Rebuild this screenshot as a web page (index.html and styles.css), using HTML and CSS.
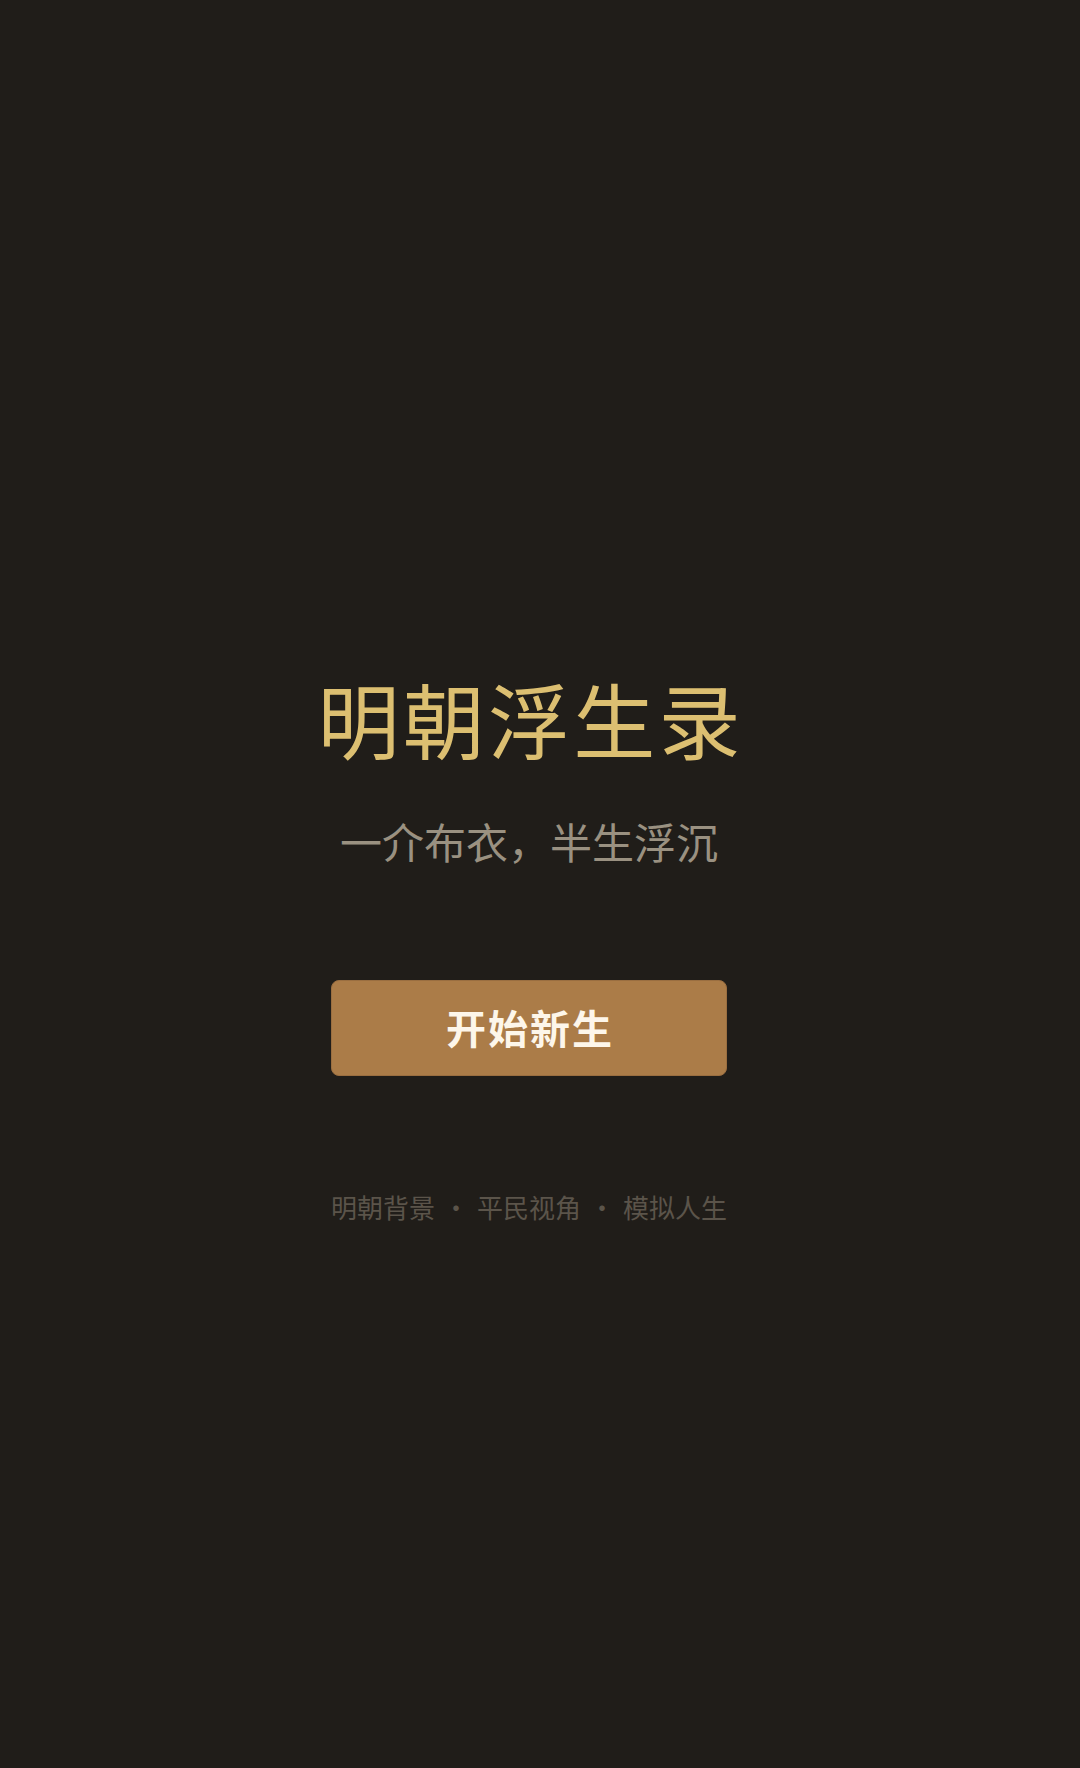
FILE: index.html
```html
<!DOCTYPE html>
<html lang="zh-CN">
<head>
<meta charset="utf-8">
<title>明朝浮生录</title>
<link rel="stylesheet" href="styles.css">
</head>
<body>
<main class="screen">
  <h1 class="title">明朝浮生录</h1>
  <p class="subtitle">一介布衣，半生浮沉</p>
  <button class="start-btn" type="button">开始新生</button>
  <div class="tags">
    <span class="tag">明朝背景</span>
    <span class="dot">・</span>
    <span class="tag">平民视角</span>
    <span class="dot">・</span>
    <span class="tag">模拟人生</span>
  </div>
</main>
</body>
</html>
```

FILE: styles.css
```css
html, body {
  margin: 0;
  padding: 0;
  background: #201d19;
}
body {
  font-family: "Noto Sans CJK SC", "Noto Sans", sans-serif;
}
.screen {
  box-sizing: border-box;
  min-height: 1768px;
  width: 1080px;
  display: flex;
  flex-direction: column;
  align-items: center;
  padding: 668px 22px 0 0;
}
.title {
  margin: 0;
  font-size: 82px;
  line-height: 100px;
  font-weight: 400;
  color: #dcbf71;
  letter-spacing: 3.2px;
  padding-left: 3.2px;
}
.subtitle {
  margin: 43px 0 0;
  font-size: 42px;
  line-height: 60px;
  color: #9a9181;
}
.start-btn {
  margin-top: 109px;
  width: 396px;
  height: 96px;
  border: 1px solid #9a6e40;
  border-radius: 8px;
  background: #ab7c48;
  color: #fdf6ea;
  font-family: inherit;
  font-size: 40px;
  font-weight: 700;
  letter-spacing: 2px;
  padding: 0 0 2px 2px;
}
.tags {
  margin-top: 113px;
  display: flex;
  align-items: center;
  gap: 8px;
  font-size: 26px;
  line-height: 36px;
  color: #5b544a;
}
.dot {
  width: 26px;
  text-align: center;
}
```
